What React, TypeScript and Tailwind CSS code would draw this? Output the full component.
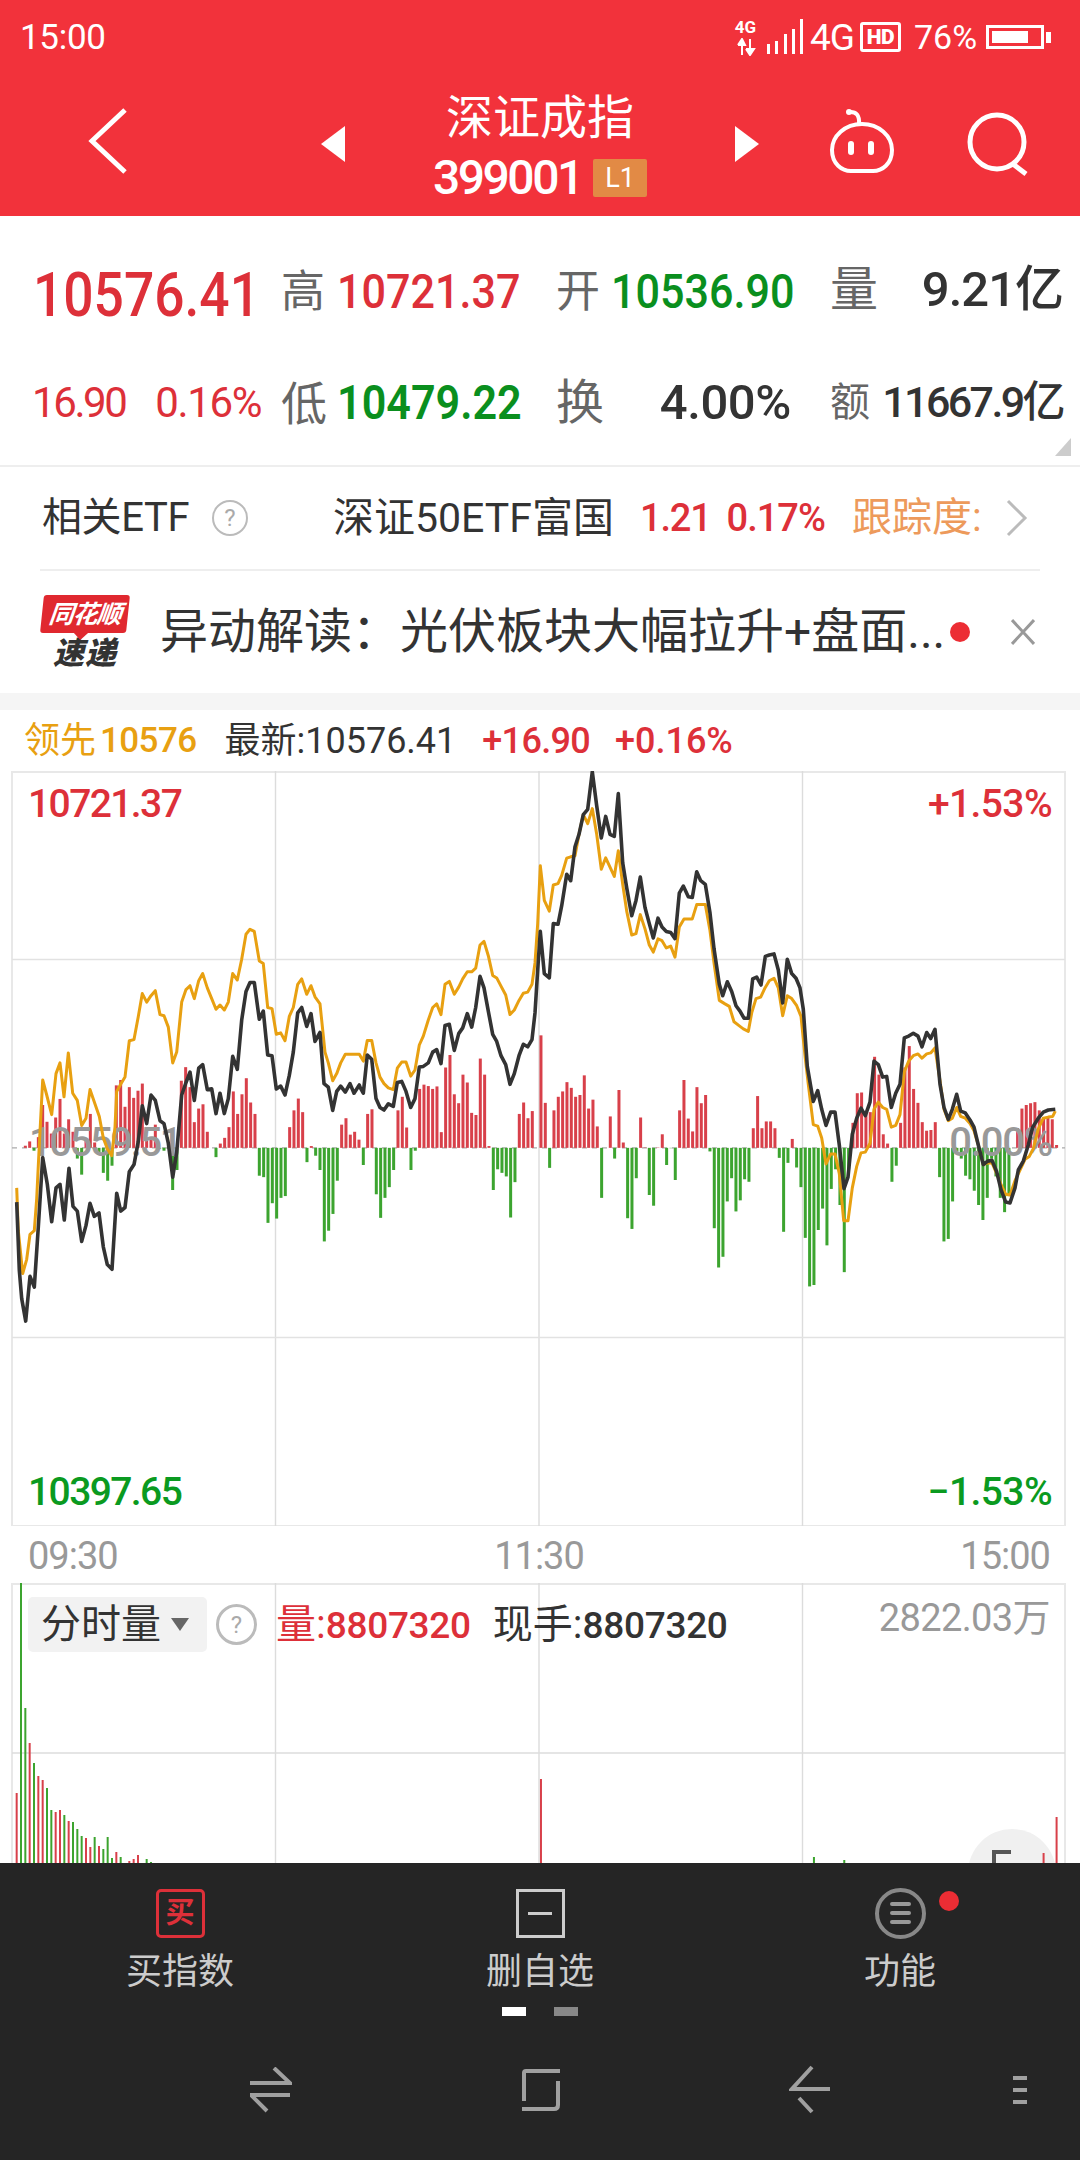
const blackA = [50,1210,58,1400,65,1480,77,1543,90,1418,103,1448,115,1280,128,1085,142,1160,155,1265,168,1170,180,1160,193,1260,207,1115,219,1222,232,1235,245,1320,258,1275,270,1213,283,1250,297,1240,310,1335,322,1385,336,1398,350,1185,362,1235,375,1225,388,1125,402,1105,415,1040,427,940,440,990,453,910,466,925,480,982,492,990,505,1045,518,1140,530,1070,545,910,558,875,570,846,583,925,596,835,608,825,622,895,635,893,648,962,660,905,673,962,685,920,698,802,712,838,725,700,738,620,750,595,763,595,778,698,790,675,803,798,816,800,829,893,842,885,855,910,868,855,880,790,893,680,905,665,920,718,933,682,945,760,960,735,972,878,985,888,998,953,1010,900,1022,885,1036,902,1050,878,1062,905,1078,882]
const blackB = [0,888,10,905,22,798,35,810,48,920,60,945,72,952,85,935,100,942,112,875,125,872,138,900,152,945,165,920,178,832,190,830,205,820,218,790,230,783,243,822,255,715,268,712,283,785,296,738,308,722,322,682,335,720,347,665,360,578,372,610,385,675,398,740,410,760,423,800,437,825,450,880,463,850,477,800,490,768,503,775,516,755,525,680,533,560,541,452,553,570,568,582,580,430,594,432,605,380,620,292,632,310,645,215,657,180,670,125,683,110,697,5,710,100,724,190,737,130,750,180,763,186,775,66,788,260,800,330,815,408,828,365,841,300,855,385,868,430,880,470,894,415,906,440,919,452,932,455,945,472,958,345,970,325,985,355,997,357,1010,285,1022,310,1036,320,1050,400,1062,500,1078,600]
const blackC = [8,632,22,593,35,620,48,660,60,675,72,695,85,695,98,585,110,580,123,602,136,522,148,518,162,515,175,560,188,652,202,530,215,570,228,583,240,610,250,670,262,830,280,928,293,898,305,950,318,995,332,958,345,958,358,1050,372,1172,384,1140,397,1020,410,975,423,947,436,968,450,930,462,815,475,825,488,860,500,858,514,945,527,905,540,880,553,750,566,745,580,737,594,745,606,775,620,735,632,752,645,726,660,880,672,945,685,978,697,950,710,908,722,955,736,960,750,980,762,1000,775,1050,790,1105,803,1095,816,1093,830,1125,843,1175,857,1210,870,1212,885,1170,895,1120,910,1095,925,1050,938,1000,955,975,970,958,985,952,1006,950]

const orangeA = [50,1170,55,1290,68,1410,80,1370,90,1300,103,1290,110,1200,118,1050,128,868,140,910,155,965,168,850,180,820,192,915,205,792,218,905,232,925,245,995,258,975,270,895,285,935,298,970,310,1030,322,1060,335,1080,345,1000,350,900,362,880,375,860,388,758,402,755,415,690,427,626,440,650,453,632,466,618,480,685,492,688,505,720,518,820,530,790,545,650,558,615,570,604,583,640,596,590,608,570,622,610,635,640,648,670,660,658,673,672,685,650,698,570,712,588,725,530,738,460,750,446,763,452,778,535,790,542,803,665,816,668,829,740,842,736,855,758,868,690,880,665,893,600,905,585,920,628,933,604,945,635,960,655,975,790,985,820,998,870,1010,850,1022,820,1036,796,1078,796]
const orangeB = [10,815,22,757,35,757,48,820,60,860,72,878,85,890,100,895,112,835,125,818,138,818,152,857,165,840,178,770,190,745,205,700,218,665,230,655,243,685,255,600,268,592,283,628,296,608,308,585,322,565,335,565,347,555,360,490,372,480,385,520,398,575,410,582,423,605,437,630,450,685,463,672,477,645,490,625,503,622,516,600,525,540,533,430,541,268,553,365,568,395,580,322,594,318,605,295,620,247,632,243,645,240,657,180,670,125,683,150,697,108,710,180,724,278,737,246,750,272,763,298,775,226,788,320,800,395,815,462,828,458,841,405,855,445,868,490,880,510,894,473,906,478,919,498,932,493,945,524,958,440,972,417,997,417,1010,377,1036,377,1050,450,1062,540,1078,645]
const orangeC = [15,655,28,662,42,705,56,715,70,725,85,732,95,680,108,640,122,636,135,610,148,590,162,583,175,610,188,688,202,632,215,640,230,660,243,690,255,800,265,880,280,993,293,997,305,1030,318,1103,332,1075,345,1075,358,1130,371,1262,384,1262,397,1170,410,1110,423,1072,436,1070,450,1045,462,950,475,930,488,945,500,950,514,1000,527,995,540,965,553,845,566,815,580,800,594,795,606,807,620,795,632,792,645,778,660,870,672,950,685,982,697,975,710,945,722,970,736,975,750,990,762,1010,775,1050,790,1105,803,1100,816,1100,830,1130,843,1160,857,1188,870,1190,885,1150,900,1120,915,1090,928,1082,940,1060,955,1005,970,975,985,972,998,970,1006,955]

// pairs were read off the crops: x is 3 units per px, y is 2.8 units per px
function toPoints(parts: number[][]) {
  const out: string[] = []
  parts.forEach((part, p) => {
    for (let i = 0; i < part.length; i += 2) {
      const x = part[i] / 3 + p * 360
      const y = part[i + 1] / 2.8 - 1
      out.push(x.toFixed(1) + "," + y.toFixed(1))
    }
  })
  return out.join(" ")
}

// minute bars around the zero line, same units as y above
const minuteBars = [
  0,0,6,18,-8,30,120,73,40,85,
  137,40,80,45,-30,-75,20,95,15,-20,
  -70,-92,-50,175,190,115,170,140,160,180,
  20,30,65,-2,-8,-2,-118,-62,188,226,
  170,72,110,122,45,0,-26,12,28,58,
  158,95,150,195,127,95,-78,-82,-210,-155,
  -198,-140,-135,58,105,138,100,-40,5,-22,
  -62,-262,-232,-185,-92,65,83,37,45,23,
  -48,95,108,-130,-196,-140,-110,-62,105,143,
  57,-62,-8,165,177,173,165,172,44,225,
  260,150,125,205,183,98,92,250,205,5,
  -118,-60,-70,-80,-195,-96,95,127,83,103,
  0,315,126,-56,105,143,158,184,168,143,
  148,203,110,135,60,-140,0,88,-30,162,
  15,-197,-227,-85,85,1,-132,-162,1,38,
  -48,-1,-90,105,190,82,46,170,125,148,
  -10,-225,-335,-305,-150,-85,-178,-147,-88,-95,
  55,145,55,74,74,55,-28,-235,-42,25,
  -55,-110,-252,-388,-384,-230,-170,-273,-115,-60,
  -160,-348,-60,70,153,155,100,100,255,205,
  38,12,-95,-50,70,225,285,165,126,72,
  48,50,72,-82,-262,-255,-150,-10,-30,-78,
  -88,-120,-160,-202,-140,-30,-80,-140,-180,-135,
  0,55,110,120,125,128,105,85,85,80,
  8,
]

// volume bars: [slot, top y in page px, colour]
const R = "#d8404a"
const G = "#3ca42f"
const volumeBars: [number, number, string][] = [
  [0,1793,R],[1,1583,G],[2,1708,G],[3,1743,R],[4,1763,G],[5,1776,R],[6,1780,R],[7,1788,G],
  [8,1810,G],[9,1812,R],[10,1810,R],[11,1815,G],[12,1821,R],[13,1822,G],[14,1829,G],[15,1836,G],
  [16,1838,R],[17,1847,R],[18,1837,G],[19,1846,R],[20,1849,G],[21,1837,G],[22,1858,G],[23,1852,R],
  [24,1857,G],[26,1861,R],[27,1859,R],[28,1855,R],[30,1859,G],[31,1862,G],
  [121,1779,R],[184,1857,G],[191,1860,G],[237,1853,R],[240,1817,R],
]

const slotX = (i: number) => 16.67 + 4.333 * i

function StatusBar() {
  return (
    <div className="flex h-[74px] items-center pl-[20px] text-white">
      <span className="w-[85px] text-[35px] leading-none tracking-[-0.3px]">15:00</span>
      <div className="ml-[628px] flex w-[25px] flex-col items-center">
        <span className="text-[17px] font-bold leading-[16px]">4G</span>
        <svg width="20" height="18" viewBox="0 0 20 18" className="mt-[3px]">
          <path d="M6 17V2M2 7L6 1L9 7H2" stroke="white" strokeWidth="2" fill="white" />
          <path d="M14 1V16M10 11L14 17L18 11H10" stroke="white" strokeWidth="2" fill="white" />
        </svg>
      </div>
      <svg width="38" height="38" viewBox="0 0 38 38" className="ml-[8px] mt-[2px]">
        <rect x="1" y="25" width="3" height="10" fill="white" />
        <rect x="9" y="22" width="3" height="13" fill="white" />
        <rect x="18" y="15" width="3" height="20" fill="white" />
        <rect x="26" y="10" width="3" height="25" fill="white" />
        <rect x="34" y="0" width="3" height="35" fill="white" />
      </svg>
      <span className="ml-[6px] w-[44px] text-[37px] leading-none tracking-[-1px]">4G</span>
      <div className="ml-[6px] flex h-[30px] w-[41px] items-center justify-center rounded-[3px] border-[3px] border-white text-[21px] font-black leading-none tracking-[-0.5px]">
        HD
      </div>
      <span className="ml-[13px] text-[34px] leading-none">76%</span>
      <div className="ml-[9px] flex h-[24px] w-[58px] items-center border-[3px] border-white pl-[3px]">
        <div className="h-[12px] w-[36px] bg-white" />
      </div>
      <div className="ml-[2px] h-[11px] w-[5px] bg-white" />
    </div>
  )
}

function NavBar() {
  return (
    <div className="flex h-[142px] items-start text-white">
      <svg width="40" height="68" viewBox="0 0 40 68" className="ml-[88px] mt-[33px]">
        <path d="M37 3L4 34L37 65" stroke="white" strokeWidth="5" fill="none" />
      </svg>
      <svg width="24" height="36" viewBox="0 0 24 36" className="ml-[193px] mt-[52px]">
        <path d="M24 0V36L0 18Z" fill="white" />
      </svg>
      <div className="mt-[15px] flex w-[390px] flex-col items-center">
        <span className="text-[47px] leading-[58px]">深证成指</span>
        <div className="mt-[5px] flex h-[52px] items-center">
          <span className="w-[146px] text-[48px] font-medium leading-none tracking-[-2.5px]">399001</span>
          <div className="ml-[14px] flex h-[38px] w-[54px] items-center justify-center rounded-[2px] bg-[#e28a45] text-[27px] leading-none">
            L1
          </div>
        </div>
      </div>
      <svg width="24" height="36" viewBox="0 0 24 36" className="mt-[52px]">
        <path d="M0 0V36L24 18Z" fill="white" />
      </svg>
      <svg width="72" height="68" viewBox="0 0 72 68" className="ml-[67px] mt-[34px]">
        <path d="M23 4Q34 3 33 16" stroke="white" strokeWidth="4" fill="none" />
        <circle cx="23" cy="4" r="3" fill="white" />
        <path
          d="M36 16C53 16 66 28 66 42C66 56 56 63 47 63H25C16 63 6 56 6 42C6 28 19 16 36 16Z"
          stroke="white"
          strokeWidth="4"
          fill="none"
        />
        <rect x="22" y="33" width="6" height="14" rx="3" fill="white" />
        <rect x="42" y="33" width="6" height="14" rx="3" fill="white" />
      </svg>
      <svg width="64" height="68" viewBox="0 0 64 68" className="ml-[68px] mt-[36px]">
        <circle cx="31" cy="32" r="27" stroke="white" strokeWidth="5" fill="none" />
        <path d="M47 54L60 64" stroke="white" strokeWidth="5" />
      </svg>
    </div>
  )
}

function StatsPanel() {
  return (
    <div className="relative h-[249px] pl-[33px] pt-[20px]">
      <div className="grid grid-cols-[249px_55px_219px_55px_180px_39px_233px] grid-rows-[111px_111px] items-center">
        <span className="mt-[6px] inline-block origin-left scale-x-[0.86] whitespace-nowrap text-[62px] font-medium leading-none text-[#dd3039]">10576.41</span>
        <span className="-ml-[1px] text-[44px] leading-none text-[#666666]">高</span>
        <span className="inline-block origin-left scale-x-[0.88] whitespace-nowrap text-[49px] font-medium leading-none text-[#dd3039]">10721.37</span>
        <span className="text-[44px] leading-none text-[#666666]">开</span>
        <span className="inline-block origin-left scale-x-[0.88] whitespace-nowrap text-[49px] font-medium leading-none text-[#0a8f1e]">10536.90</span>
        <span />
        <div className="-mt-[4px] flex w-[233px] items-center justify-between">
          <span className="text-[48px] leading-none text-[#666666]">量</span>
          <span className="text-[49px] font-medium leading-none tracking-[-1px] text-[#333333]">9.21亿</span>
        </div>

        <div className="-ml-[1px] flex w-[229px] items-center justify-between">
          <span className="text-[42px] leading-none tracking-[-2.4px] text-[#dd3039]">16.90</span>
          <span className="text-[42px] leading-none tracking-[-1.4px] text-[#dd3039]">0.16%</span>
        </div>
        <span className="-ml-[1px] mt-[2px] text-[46px] leading-none text-[#666666]">低</span>
        <span className="inline-block origin-left scale-x-[0.88] whitespace-nowrap text-[49px] font-semibold leading-none text-[#0a8f1e]">10479.22</span>
        <span className="text-[48px] leading-none text-[#666666]">换</span>
        <span className="justify-self-end whitespace-nowrap text-[49px] font-medium leading-none tracking-[-0.4px] text-[#333333]">4.00%</span>
        <span />
        <div className="flex w-[233px] items-center justify-between">
          <span className="text-[40px] leading-none text-[#666666]">额</span>
          <span className="text-[43px] font-medium leading-none tracking-[-2.6px] text-[#333333]">11667.9亿</span>
        </div>
      </div>
      <div className="absolute bottom-[9px] left-[1055px] h-[18px] w-[16px] bg-[#cccccc] [clip-path:polygon(100%_0,100%_100%,0_100%)]" />
    </div>
  )
}

function HelpMark({ size }: { size: string }) {
  return (
    <div className={size + " flex items-center justify-center rounded-full border-2 border-[#bbbbbb] text-[#aaaaaa]"}>
      <span className="text-[24px] leading-none">?</span>
    </div>
  )
}

function EtfRow() {
  return (
    <div className="flex h-[102px] items-center pl-[42px]">
      <span className="w-[160px] text-[40px] leading-none tracking-[-0.4px] text-[#333333]">相关ETF</span>
      <HelpMark size="ml-[10px] h-[36px] w-[36px]" />
      <span className="ml-[85px] w-[307px] text-[41px] leading-none text-[#333333]">深证50ETF富国</span>
      <span className="text-[38px] font-medium leading-none tracking-[-1.2px] text-[#dd3039]">1.21</span>
      <span className="ml-[16px] text-[38px] font-medium leading-none tracking-[-1px] text-[#dd3039]">0.17%</span>
      <span className="ml-[27px] w-[154px] text-[40px] leading-none text-[#ed9a5b]">跟踪度:</span>
      <svg width="22" height="38" viewBox="0 0 22 38">
        <path d="M2 2L19 19L2 36" stroke="#bbbbbb" strokeWidth="3" fill="none" />
      </svg>
    </div>
  )
}

function NewsRow() {
  return (
    <div className="flex h-[122px] items-center pl-[42px]">
      <div className="-ml-[1px] flex w-[88px] flex-col items-center">
        <div className="relative flex h-[38px] w-[86px] -skew-x-6 items-center justify-center rounded-[3px] bg-[#e0282f]">
          <span className="text-[25px] font-bold italic leading-none tracking-[-1px] text-white">同花顺</span>
          <div className="absolute -bottom-[5px] left-[36px] h-[10px] w-[10px] rotate-45 bg-[#e0282f]" />
        </div>
        <span className="mt-[5px] text-[31px] font-black italic leading-none tracking-[1px] text-[#333333]">速递</span>
      </div>
      <span className="ml-[31px] w-[785px] whitespace-nowrap text-[48px] leading-none text-[#333333]">
        异动解读：光伏板块大幅拉升+盘面...
      </span>
      <div className="ml-[5px] h-[20px] w-[20px] rounded-full bg-[#ec2d34]" />
      <svg width="24" height="26" viewBox="0 0 24 26" className="ml-[41px]">
        <path d="M1 1L23 25M23 1L1 25" stroke="#999999" strokeWidth="3" />
      </svg>
    </div>
  )
}

function PriceChart() {
  const base = 1058 / 2.8 - 1
  return (
    <div className="relative h-[755px] w-[1080px]">
      <svg width="1080" height="755" viewBox="0 0 1080 755" className="block">
        <path d="M12 1H1065V755H12Z" stroke="#e8e8e8" strokeWidth="2" fill="none" />
        <path d="M275.5 0V755M539 0V755M802.5 0V755" stroke="#dcdcdc" strokeWidth="1.4" />
        <path d="M12 188.5H1065M12 566.5H1065" stroke="#e2e2e2" strokeWidth="1.4" />
        <path d={`M12 ${base}H1065`} stroke="#aaaaaa" strokeWidth="1.4" strokeDasharray="5 5" />
        {minuteBars.map((v, i) => (
          <rect
            key={i}
            x={slotX(i) - 1.5}
            y={v > 0 ? base - v / 2.8 : base}
            width="3"
            height={Math.abs(v) / 2.8}
            fill={v > 0 ? R : G}
          />
        ))}
      </svg>

      <span className="absolute left-[28px] top-[11px] text-[39px] font-medium leading-[44px] tracking-[-1.6px] text-[#dd3039]">
        10721.37
      </span>
      <span className="absolute right-[28px] top-[11px] text-[39px] font-medium leading-[44px] tracking-[-0.6px] text-[#dd3039]">
        +1.53%
      </span>
      <span className="absolute left-[28px] top-[699px] text-[39px] font-medium leading-[44px] tracking-[-1.6px] text-[#0a9a20]">
        10397.65
      </span>
      <span className="absolute right-[28px] top-[699px] text-[39px] font-medium leading-[44px] tracking-[-0.6px] text-[#0a9a20]">
        −1.53%
      </span>
      <span className="absolute left-[29px] top-[350px] text-[40px] font-medium leading-[44px] tracking-[-2.4px] text-[#999999]">
        10559.51
      </span>
      <span className="absolute right-[28px] top-[350px] text-[40px] font-medium leading-[44px] tracking-[-1.2px] text-[#999999]">
        0.00%
      </span>

      <svg width="1080" height="755" viewBox="0 0 1080 755" className="absolute left-0 top-0" fill="none">
        <polyline
          points={toPoints([orangeA, orangeB, orangeC])}
          stroke="#e8a011"
          strokeWidth="3"
          strokeLinejoin="round"
        />
        <polyline
          points={toPoints([blackA, blackB, blackC])}
          stroke="#333333"
          strokeWidth="3.6"
          strokeLinejoin="round"
        />
      </svg>
    </div>
  )
}

function VolumeChart() {
  return (
    <div className="relative h-[280px] w-[1080px] overflow-hidden">
      <svg width="1080" height="280" viewBox="0 0 1080 280" className="block">
        <path d="M12 280V1H1065V280" stroke="#e8e8e8" strokeWidth="2" fill="none" />
        <path d="M275.5 0V280M539 0V280M802.5 0V280" stroke="#dcdcdc" strokeWidth="1.4" />
        <path d="M12 170H1065" stroke="#dcdcdc" strokeWidth="1.4" />
        <circle cx="1012" cy="290" r="44" fill="#f0f0f0" />
        <path d="M1011 269H994V280" stroke="#555555" strokeWidth="4" fill="none" />
        {volumeBars.map(([slot, top, color]) => (
          <rect key={slot} x={slotX(slot) - 1} y={top - 1583} width="2" height={1863 - top} fill={color} />
        ))}
      </svg>

      <div className="absolute left-[28px] top-[14px] flex h-[55px] w-[179px] items-center rounded-[5px] bg-[#f2f2f2] pl-[13px]">
        <span className="text-[40px] leading-none text-[#333333]">分时量</span>
        <svg width="18" height="13" viewBox="0 0 18 13" className="ml-[10px]">
          <path d="M0 0H18L9 13Z" fill="#666666" />
        </svg>
      </div>
      <HelpMark size="absolute left-[216px] top-[21px] h-[41px] w-[41px] border-[3px]" />
      <div className="absolute left-[276px] top-[20px] flex h-[44px] items-center leading-none">
        <span className="text-[40px] text-[#dd3039]">量:</span>
        <span className="text-[37px] font-medium tracking-[-0.3px] text-[#dd3039]">8807320</span>
        <span className="ml-[22px] text-[40px] text-[#333333]">现手:</span>
        <span className="text-[37px] font-medium tracking-[-0.3px] text-[#333333]">8807320</span>
      </div>
      <span className="absolute right-[30px] top-[13px] text-[38px] leading-[44px] tracking-[-0.6px] text-[#999999]">
        2822.03万
      </span>
    </div>
  )
}

function FooterAction({ label, children }: { label: string; children: React.ReactNode }) {
  return (
    <div className="flex flex-col items-center">
      <div className="flex h-[52px] items-center">{children}</div>
      <span className="mt-[11px] text-[36px] leading-[44px] text-[#cccccc]">{label}</span>
    </div>
  )
}

function Footer() {
  return (
    <div className="h-[297px] bg-[#252525] pt-[24px]">
      <div className="grid grid-cols-3">
        <FooterAction label="买指数">
          <div className="flex h-[49px] w-[49px] items-center justify-center rounded-[5px] border-[3px] border-[#dd3039]">
            <span className="text-[29px] font-bold leading-none text-[#dd3039]">买</span>
          </div>
        </FooterAction>
        <FooterAction label="删自选">
          <div className="flex h-[49px] w-[49px] items-center justify-center border-[3px] border-[#cccccc]">
            <div className="h-[3px] w-[24px] bg-[#cccccc]" />
          </div>
        </FooterAction>
        <FooterAction label="功能">
          <div className="relative flex h-[51px] w-[51px] flex-col items-center justify-center gap-[5px] rounded-full border-[4px] border-[#888888]">
            <div className="h-[4px] w-[21px] rounded-full bg-[#999999]" />
            <div className="h-[4px] w-[21px] rounded-full bg-[#999999]" />
            <div className="h-[4px] w-[21px] rounded-full bg-[#999999]" />
            <div className="absolute -top-[1px] left-[60px] h-[20px] w-[20px] rounded-full bg-[#ec2d34]" />
          </div>
        </FooterAction>
      </div>

      <div className="mt-[13px] flex justify-center gap-[28px]">
        <div className="h-[9px] w-[24px] bg-white" />
        <div className="h-[9px] w-[24px] bg-[#888888]" />
      </div>

      <div className="mt-[44px] flex h-[60px] items-center">
        <svg width="42" height="46" viewBox="0 0 42 46" className="ml-[250px]" fill="none">
          <path d="M0 16H40L24 1M40 28H1L17 44" stroke="#a0a0a0" strokeWidth="4" />
        </svg>
        <svg width="42" height="46" viewBox="0 0 42 46" className="ml-[228px]" fill="none">
          <path d="M40 4H6Q4 4 4 6V34M38 14V38Q38 42 34 42H2" stroke="#a0a0a0" strokeWidth="4" />
        </svg>
        <svg width="44" height="50" viewBox="0 0 44 50" className="ml-[227px]" fill="none">
          <path d="M23 2L3 24H41M10 33L23 47" stroke="#a0a0a0" strokeWidth="4" />
        </svg>
        <div className="ml-[180px] flex flex-col gap-[8px]">
          <div className="h-[4px] w-[14px] bg-[#a0a0a0]" />
          <div className="h-[4px] w-[14px] bg-[#a0a0a0]" />
          <div className="h-[4px] w-[14px] bg-[#a0a0a0]" />
        </div>
      </div>
    </div>
  )
}

export default function App() {
  return (
    <div className="flex h-[2160px] w-[1080px] flex-col overflow-hidden bg-white font-['Roboto','Noto_Sans_CJK_SC',sans-serif]">
      {/* Header */}
      <div className="h-[216px] bg-[#f2323b]">
        <StatusBar />
        <NavBar />
      </div>

      <StatsPanel />
      <div className="h-[2px] bg-[#eeeeee]" />
      <EtfRow />
      <div className="mx-[40px] h-[2px] bg-[#eeeeee]" />
      <NewsRow />
      <div className="h-[17px] bg-[#f5f5f5]" />

      {/* Quote line */}
      <div className="flex h-[61px] items-center pl-[24px]">
        <span className="text-[36px] leading-none text-[#e8a011]">领先</span>
        <span className="ml-[4px] text-[35px] font-medium leading-none tracking-[-0.6px] text-[#e8a011]">10576</span>
        <span className="ml-[28px] text-[36px] leading-none text-[#333333]">最新:10576.41</span>
        <span className="ml-[26px] text-[36px] font-medium leading-none tracking-[-0.7px] text-[#dd3039]">+16.90</span>
        <span className="ml-[25px] text-[36px] font-medium leading-none text-[#dd3039]">+0.16%</span>
      </div>

      <PriceChart />

      <div className="flex h-[57px] items-center justify-between pl-[28px] pr-[30px] pt-[2px] text-[38px] leading-none tracking-[-1px] text-[#999999]">
        <span>09:30</span>
        <span>11:30</span>
        <span>15:00</span>
      </div>

      <VolumeChart />
      <Footer />
    </div>
  )
}
